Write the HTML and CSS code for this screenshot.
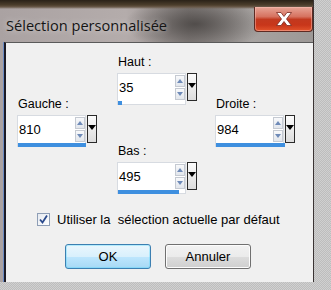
FILE: index.html
```html
<!DOCTYPE html>
<html lang="fr">
<head>
<meta charset="utf-8">
<title>Sélection personnalisée</title>
<link rel="stylesheet" href="styles.css">
</head>
<body>
<div class="window">
  <div class="titlebar">
    <span class="title">Sélection personnalisée</span>
    <div class="close">
      <svg width="22" height="16" viewBox="0 0 22 16">
        <path d="M3.5 1.5 L8 1.5 L11 5.5 L14 1.5 L18.5 1.5 L13.5 8 L18.5 14.5 L14 14.5 L11 10.5 L8 14.5 L3.5 14.5 L8.5 8 Z" fill="#fff" stroke="#7a2a20" stroke-width="0.8" stroke-linejoin="round"/>
      </svg>
    </div>
  </div>
  <div class="client">
    <div class="fields">
      <div class="col col-left">
        <div class="field">
          <div class="label">Gauche :</div>
          <div class="widget">
            <div class="box">
              <div class="entry">
                <span class="value">810</span>
                <div class="spin"><span class="up"></span><span class="down"></span></div>
              </div>
              <div class="track"><div class="bar" style="width:68px"></div></div>
            </div>
            <div class="drop"><span class="tri"></span></div>
          </div>
        </div>
      </div>
      <div class="col col-mid">
        <div class="field">
          <div class="label">Haut :</div>
          <div class="widget">
            <div class="box">
              <div class="entry">
                <span class="value">35</span>
                <div class="spin"><span class="up"></span><span class="down"></span></div>
              </div>
              <div class="track"><div class="bar" style="width:4px"></div></div>
            </div>
            <div class="drop"><span class="tri"></span></div>
          </div>
        </div>
        <div class="field field-bas">
          <div class="label">Bas :</div>
          <div class="widget">
            <div class="box">
              <div class="entry">
                <span class="value">495</span>
                <div class="spin"><span class="up"></span><span class="down"></span></div>
              </div>
              <div class="track"><div class="bar" style="width:61px"></div></div>
            </div>
            <div class="drop"><span class="tri"></span></div>
          </div>
        </div>
      </div>
      <div class="col col-right">
        <div class="field">
          <div class="label">Droite :</div>
          <div class="widget">
            <div class="box">
              <div class="entry">
                <span class="value">984</span>
                <div class="spin"><span class="up"></span><span class="down"></span></div>
              </div>
              <div class="track"><div class="bar" style="width:69px"></div></div>
            </div>
            <div class="drop"><span class="tri"></span></div>
          </div>
        </div>
      </div>
    </div>
    <div class="check">
      <span class="checkbox">
        <svg width="11" height="11" viewBox="0 0 11 11"><path d="M2 5.5 L4.5 8.5 L9 1.5" fill="none" stroke="#2b4a8c" stroke-width="1.8"/></svg>
      </span>
      <span class="check-text">Utiliser la&nbsp; sélection actuelle par défaut</span>
    </div>
    <div class="buttons">
      <div class="btn btn-ok">OK</div>
      <div class="btn">Annuler</div>
    </div>
  </div>
</div>
</body>
</html>
```
FILE: styles.css
```css
html, body {
  margin: 0;
  padding: 0;
}
body {
  width: 331px;
  height: 290px;
  overflow: hidden;
  background-color: #c6c6c6;
  background-image: repeating-conic-gradient(#bdbdbd 0 25%, #d0d0d0 0 50%);
  background-size: 2px 2px;
  font-family: "Liberation Sans", Arial, sans-serif;
}
.window {
  width: 314px;
  height: 282px;
  display: flex;
  flex-direction: column;
  background:
    linear-gradient(to bottom, #2a2218 0, #4c3e2c 5px, #6a5a4a 7px, rgba(0,0,0,0) 9px),
    radial-gradient(ellipse 70px 28px at 195px 24px, rgba(70,66,64,0.85), rgba(70,66,64,0) 100%),
    linear-gradient(to right, #aaa2a2 0, #b4acab 40%, #8e8886 60%, #a7a3a1 80%, #9c9896 100%);
  box-shadow: inset -1px 0 #3a3434;
}
.titlebar {
  height: 42px;
  flex: none;
  display: flex;
  align-items: flex-start;
  justify-content: space-between;
}
.title {
  margin-top: 15px;
  margin-left: 6px;
  font-family: "Open Sans", "Liberation Sans", sans-serif;
  font-size: 14.6px;
  line-height: 20px;
  color: #151515;
  text-shadow: 0 0 6px rgba(255,255,255,0.6);
}
.close {
  margin-top: 7px;
  margin-right: 1px;
  width: 57px;
  height: 24px;
  border: 1px solid #5e2a22;
  border-top: none;
  border-radius: 0 0 4px 4px;
  background: linear-gradient(to bottom, #e7a597 0, #d6725f 40%, #c2391f 52%, #c8361a 75%, #e2542c 100%);
  box-shadow: inset 0 0 0 1px rgba(255,200,190,0.45);
  display: flex;
  align-items: center;
  justify-content: center;
}
.close svg { display: block; }
.client {
  flex: 1;
  margin-left: 4px;
  margin-right: 1px;
  background: #f0f0f0;
  border-top: 1px solid #5a5a5a;
  border-left: 2px solid #1b1b26;
  box-shadow: -1px 0 #6c8cc4;
  display: flex;
  flex-direction: column;
  font-size: 12.5px;
  color: #000;
}
.fields {
  display: flex;
  padding-left: 11px;
  padding-top: 12px;
}
.col {
  width: 82px;
  display: flex;
  flex-direction: column;
}
.col-left { padding-top: 42px; }
.col-mid { margin-left: 18px; }
.col-right { margin-left: 16px; padding-top: 42px; }
.field-bas { margin-top: 39px; }
.label {
  height: 15px;
  line-height: 15px;
  margin-bottom: 3px;
  padding-left: 1px;
}
.widget {
  display: flex;
  gap: 1px;
}
.box {
  width: 69px;
  height: 32px;
  background: #fff;
  box-shadow: inset 0 0 0 1px #d7dbe1;
  display: flex;
  flex-direction: column;
}
.entry {
  height: 28px;
  display: flex;
  align-items: center;
  justify-content: space-between;
}
.value {
  padding-left: 2px;
  font-size: 13px;
}
.spin {
  width: 10px;
  height: 25px;
  margin-right: 1px;
  display: flex;
  flex-direction: column;
  gap: 1px;
}
.spin span {
  flex: 1;
  border: 1px solid #c5cad2;
  background: linear-gradient(to bottom, #f8f9fb, #e2e6ec);
  display: flex;
  align-items: center;
  justify-content: center;
}
.spin .up::before {
  content: "";
  border-left: 3px solid transparent;
  border-right: 3px solid transparent;
  border-bottom: 4px solid #6e8ab8;
}
.spin .down::before {
  content: "";
  border-left: 3px solid transparent;
  border-right: 3px solid transparent;
  border-top: 4px solid #6e8ab8;
}
.track {
  height: 4px;
  padding-left: 1px;
}
.bar {
  height: 4px;
  background: #3e8fdf;
}
.drop {
  width: 10px;
  height: 28px;
  border: 1px solid #2a2a2a;
  background: linear-gradient(to bottom, #fcfcfc, #dcdcdc);
  display: flex;
  justify-content: center;
  padding-top: 9px;
  box-sizing: border-box;
}
.tri {
  width: 0;
  height: 0;
  border-left: 4px solid transparent;
  border-right: 4px solid transparent;
  border-top: 5px solid #000;
}
.check {
  display: flex;
  align-items: center;
  margin-top: 18px;
  padding-left: 31px;
  height: 14px;
}
.checkbox {
  width: 11px;
  height: 11px;
  border: 1px solid #8e9eb6;
  background: linear-gradient(to bottom right, #e6eaf0, #ffffff);
  display: flex;
  margin-right: 7px;
}
.checkbox svg { display: block; }
.check-text {
  font-size: 13px;
  white-space: pre;
}
.buttons {
  display: flex;
  gap: 14px;
  margin-top: 18px;
  padding-left: 59px;
}
.btn {
  width: 84px;
  height: 23px;
  border: 1px solid #707070;
  border-radius: 3px;
  background: linear-gradient(to bottom, #f2f2f2 0, #ebebeb 50%, #dddddd 51%, #cfcfcf 100%);
  box-shadow: inset 0 0 0 1px #fcfcfc;
  display: flex;
  align-items: center;
  justify-content: center;
  font-size: 13px;
}
.btn-ok {
  border-color: #3c7fb1;
  background: linear-gradient(to bottom, #eaf6fd 0, #d9f0fc 50%, #bee6fd 51%, #a7d9f5 100%);
  box-shadow: inset 0 0 0 1px #48d5fd55;
}
```
